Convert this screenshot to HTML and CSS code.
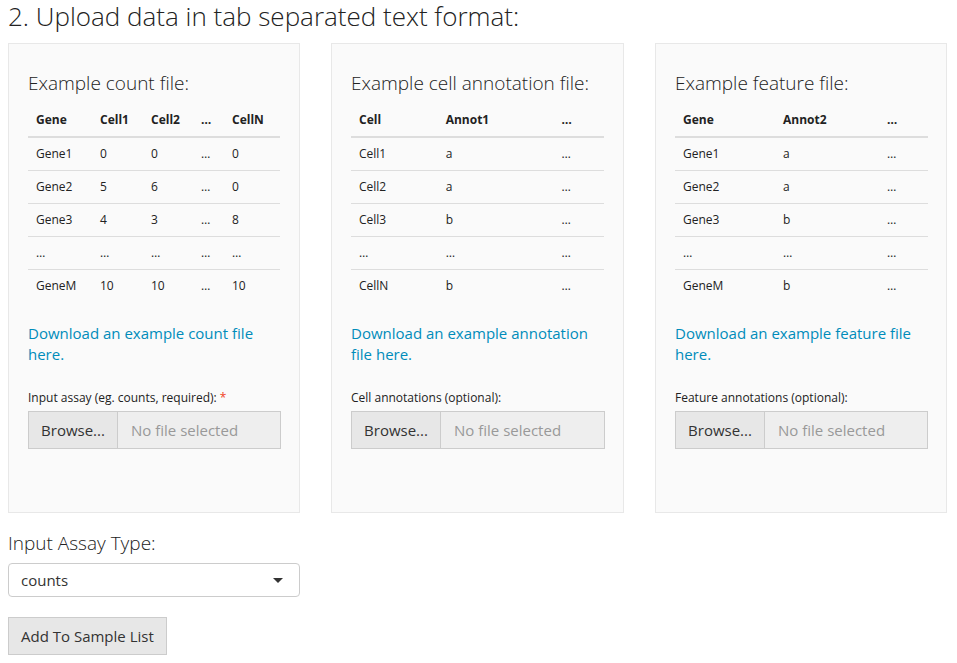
FILE: index.html
```html
<!DOCTYPE html>
<html>
<head>
<meta charset="utf-8">
<title>Upload data</title>
<link rel="stylesheet" href="styles.css">
</head>
<body>
<div class="page">
  <h3 class="title">2. Upload data in tab separated text format:</h3>
  <div class="wells">
    <div class="well">
      <h4 class="well-title">Example count file:</h4>
      <table class="ex-table">
        <colgroup><col class="w64"><col class="w51"><col class="w50"><col class="w31"><col class="w56"></colgroup>
        <thead><tr><th>Gene</th><th>Cell1</th><th>Cell2</th><th>…</th><th>CellN</th></tr></thead>
        <tbody>
          <tr><td>Gene1</td><td>0</td><td>0</td><td>…</td><td>0</td></tr>
          <tr><td>Gene2</td><td>5</td><td>6</td><td>…</td><td>0</td></tr>
          <tr><td>Gene3</td><td>4</td><td>3</td><td>…</td><td>8</td></tr>
          <tr><td>…</td><td>…</td><td>…</td><td>…</td><td>…</td></tr>
          <tr><td>GeneM</td><td>10</td><td>10</td><td>…</td><td>10</td></tr>
        </tbody>
      </table>
      <p class="dl"><a href="#">Download an example count file here.</a></p>
      <label class="in-label">Input assay (eg. counts, required): <span class="req">*</span></label>
      <div class="file-group"><span class="browse">Browse...</span><span class="file-name">No file selected</span></div>
    </div>
    <div class="well">
      <h4 class="well-title">Example cell annotation file:</h4>
      <table class="ex-table">
        <colgroup><col class="w86"><col class="w115"><col class="w50"></colgroup>
        <thead><tr><th>Cell</th><th>Annot1</th><th>…</th></tr></thead>
        <tbody>
          <tr><td>Cell1</td><td>a</td><td>…</td></tr>
          <tr><td>Cell2</td><td>a</td><td>…</td></tr>
          <tr><td>Cell3</td><td>b</td><td>…</td></tr>
          <tr><td>…</td><td>…</td><td>…</td></tr>
          <tr><td>CellN</td><td>b</td><td>…</td></tr>
        </tbody>
      </table>
      <p class="dl"><a href="#">Download an example annotation file here.</a></p>
      <label class="in-label">Cell annotations (optional):</label>
      <div class="file-group"><span class="browse">Browse...</span><span class="file-name">No file selected</span></div>
    </div>
    <div class="well">
      <h4 class="well-title">Example feature file:</h4>
      <table class="ex-table">
        <colgroup><col class="w100"><col class="w104"><col class="w49"></colgroup>
        <thead><tr><th>Gene</th><th>Annot2</th><th>…</th></tr></thead>
        <tbody>
          <tr><td>Gene1</td><td>a</td><td>…</td></tr>
          <tr><td>Gene2</td><td>a</td><td>…</td></tr>
          <tr><td>Gene3</td><td>b</td><td>…</td></tr>
          <tr><td>…</td><td>…</td><td>…</td></tr>
          <tr><td>GeneM</td><td>b</td><td>…</td></tr>
        </tbody>
      </table>
      <p class="dl"><a href="#">Download an example feature file here.</a></p>
      <label class="in-label">Feature annotations (optional):</label>
      <div class="file-group"><span class="browse">Browse...</span><span class="file-name">No file selected</span></div>
    </div>
  </div>
  <div class="assay">
    <label class="assay-label">Input Assay Type:</label>
    <div class="select"><span>counts</span><span class="caret"></span></div>
    <button class="btn">Add To Sample List</button>
  </div>
</div>
</body>
</html>
```
FILE: styles.css
```css
* { box-sizing: border-box; }
html, body { margin: 0; padding: 0; background: #fff; }
body {
  font-family: "Open Sans", "Liberation Sans", sans-serif;
  font-size: 15px;
  line-height: 1.4;
  color: #222;
}
.page { padding: 0 8px; }
.title {
  font-size: 26px;
  font-weight: 300;
  line-height: 1.1;
  margin: 2px 0 12px;
}
.wells {
  display: grid;
  grid-template-columns: 292px 293px 292px;
  column-gap: 31px;
}
.well {
  background: #fafafa;
  border: 1px solid #e8e8e8;
  padding: 19px 19px 63px;
}
.well-title {
  font-size: 19px;
  font-weight: 300;
  line-height: 1.1;
  margin: 10px 0 10.5px;
}
.ex-table {
  width: 100%;
  border-collapse: collapse;
  table-layout: fixed;
  font-size: 12px;
  line-height: 16px;
  margin-bottom: 21px;
}
.ex-table th, .ex-table td {
  padding: 8px;
  text-align: left;
  white-space: nowrap;
}
.ex-table th { font-weight: 700; border-bottom: 2px solid #ddd; }
.ex-table td { border-top: 1px solid #ddd; }
.ex-table tbody tr:first-child td { border-top: 0; }
.w31 { width: 31px; } .w49 { width: 49px; } .w50 { width: 50px; } .w51 { width: 51px; }
.w56 { width: 56px; } .w64 { width: 64px; } .w86 { width: 86px; } .w100 { width: 100px; }
.w104 { width: 104px; } .w115 { width: 115px; }
.dl { margin: 0 0 24.5px; line-height: 21px; }
.dl a { color: #008cba; text-decoration: none; }
.in-label {
  display: block;
  font-size: 12px;
  line-height: 17px;
  margin-bottom: 5px;
}
.req { color: #f04124; }
.file-group {
  display: flex;
  height: 38px;
  margin-right: -1px;
}
.browse {
  width: 90px;
  background: #e7e7e7;
  border: 1px solid #ccc;
  display: flex;
  align-items: center;
  justify-content: center;
  color: #333;
}
.file-name {
  flex: 1;
  background: #eee;
  border: 1px solid #ccc;
  border-left: 0;
  display: flex;
  align-items: center;
  padding-left: 13px;
  color: #999;
}
.assay { padding-top: 20px; }
.assay-label {
  display: block;
  font-size: 19px;
  font-weight: 300;
  line-height: 1.1;
  margin-bottom: 9px;
}
.select {
  width: 292px;
  height: 34px;
  border: 1px solid #ccc;
  border-radius: 4px;
  background: #fff;
  display: flex;
  align-items: center;
  justify-content: space-between;
  padding: 0 16px 0 12px;
  color: #333;
}
.caret {
  width: 0; height: 0;
  border-left: 5px solid transparent;
  border-right: 5px solid transparent;
  border-top: 5px solid #333;
}
.btn {
  margin-top: 20px;
  font-family: inherit;
  font-size: 15px;
  color: #333;
  background: #e7e7e7;
  border: 1px solid #ccc;
  height: 38px;
  padding: 0 12px;
  border-radius: 0;
}
```
